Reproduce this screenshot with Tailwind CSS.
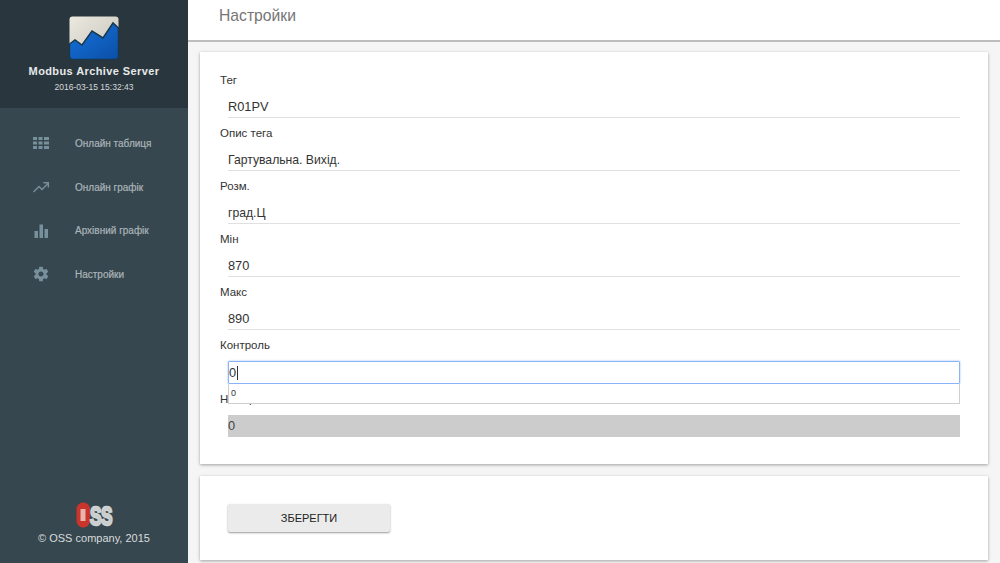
<!DOCTYPE html>
<html lang="en">
<head>
    <meta charset="UTF-8" />
    <title>Modbus Archive Server</title>
    <script src="https://cdn.jsdelivr.net/npm/@tailwindcss/browser@4"></script>
</head>
<body class="font-['Liberation_Sans',sans-serif]">
    <div class="flex h-[563px] w-[1000px] overflow-hidden bg-[#f5f5f5]">
        <!-- sidebar -->
        <aside class="flex w-[188px] shrink-0 flex-col bg-[#37474f]">
            <div class="flex h-[108px] flex-col items-center bg-[#2a363d] pt-4">
                <svg class="h-[44px] w-[50px]" viewBox="0 0 50 44">
                    <defs>
                        <linearGradient id="sky" x1="0" y1="0" x2="1" y2="1">
                            <stop offset="0" stop-color="#ece9df" />
                            <stop offset="1" stop-color="#c4c3ba" />
                        </linearGradient>
                        <linearGradient id="sea" x1="0" y1="0" x2="1" y2="1">
                            <stop offset="0" stop-color="#1673de" />
                            <stop offset="1" stop-color="#0b4fa6" />
                        </linearGradient>
                    </defs>
                    <rect x="0.5" y="0.5" width="49" height="43" rx="3" fill="url(#sky)" />
                    <path d="M0.5 28 L6 24 L13 29 L23 15 L34 22 L44 7 L49.5 12 V40.5 a3 3 0 0 1 -3 3 H3.5 a3 3 0 0 1 -3 -3 Z" fill="url(#sea)" stroke="#17384f" stroke-width="1.5" />
                </svg>
                <p class="mt-[4px] text-[11px] leading-[14px] font-bold tracking-[0.4px] text-[#e6e9ea]">Modbus Archive Server</p>
                <p class="mt-[4px] text-[8.5px] leading-[11px] text-[#d5d9db]">2016-03-15 15:32:43</p>
            </div>
            <nav class="flex flex-col pt-[13px] text-[10px] text-[#aab4b9] [-webkit-text-stroke:0.2px]">
                <a class="flex h-[44px] items-center gap-[26px] pl-[33px]">
                    <svg class="h-4 w-4 shrink-0" viewBox="0 0 16 16" fill="#78909c"><path d="M0 2h4v3H0zM5.500 2h4v3h-4zM11 2h5v3h-5zM0 6.500h4v3H0zM5.500 6.500h4v3h-4zM11 6.500h5v3h-5zM0 11h4v3H0zM5.500 11h4v3h-4zM11 11h5v3h-5z" /></svg>
                    <span>Онлайн таблиця</span>
                </a>
                <a class="flex h-[44px] items-center gap-[26px] pl-[33px]">
                    <svg class="h-4 w-4 shrink-0" viewBox="0 0 16 16" fill="none" stroke="#78909c" stroke-width="1.400"><path d="M0.500 13 L6 7.500 L9 10.500 L15 4.500" /><path d="M10.500 3.800 H15.300 V8.500" /></svg>
                    <span>Онлайн графік</span>
                </a>
                <a class="flex h-[43px] items-center gap-[26px] pl-[33px]">
                    <svg class="h-4 w-4 shrink-0" viewBox="0 0 16 16" fill="#78909c"><path d="M1.500 8h3.500v7H1.500zM6.500 1.500h3.500V15H6.500zM11.500 6h3.500v9h-3.500z" /></svg>
                    <span>Архівний графік</span>
                </a>
                <a class="flex h-[44px] items-center gap-[26px] pl-[33px]">
                    <svg class="h-4 w-4 shrink-0 scale-110" viewBox="0 0 24 24" fill="#78909c"><path d="M19.430 12.980c.04-.32.07-.64.07-.98s-.03-.66-.07-.98l2.110-1.650c.19-.15.24-.42.12-.64l-2-3.460c-.12-.22-.39-.3-.61-.22l-2.490 1c-.52-.4-1.080-.73-1.690-.98l-.38-2.650C14.460 2.180 14.250 2 14 2h-4c-.25 0-.46.18-.49.42l-.38 2.650c-.61.25-1.170.59-1.690.98l-2.490-1c-.23-.09-.49 0-.61.22l-2 3.460c-.13.22-.07.49.12.64l2.110 1.650c-.04.32-.07.65-.07.98s.03.66.07.98l-2.110 1.650c-.19.15-.24.42-.12.64l2 3.460c.12.22.39.3.61.22l2.490-1c.52.4 1.080.73 1.690.98l.38 2.650c.03.24.24.42.49.42h4c.25 0 .46-.18.49-.42l.38-2.650c.61-.25 1.170-.59 1.690-.98l2.490 1c.23.09.49 0 .61-.22l2-3.460c.12-.22.07-.49-.12-.64l-2.110-1.650zM12 15.500c-1.930 0-3.500-1.570-3.500-3.500s1.570-3.500 3.500-3.500 3.500 1.570 3.500 3.500-1.570 3.500-3.500 3.500z" /></svg>
                    <span>Настройки</span>
                </a>
            </nav>
            <div class="mt-auto flex flex-col items-center pb-[18px]">
                <svg class="h-[26px] w-[37px] overflow-visible" viewBox="0 0 37 26">
                    <rect x="0.500" y="0.500" width="13.500" height="25" rx="6.500" fill="#c9352a" />
                    <rect x="4.500" y="7" width="5" height="12" fill="#e8b4ac" />
                    <g font-family="Liberation Sans" font-weight="700" font-size="26" fill="#bfc2c3" stroke="#cfd1d2" stroke-width="2.500">
                        <text transform="translate(14 23) scale(0.66 1)">S</text>
                        <text transform="translate(25 23) scale(0.66 1)">S</text>
                    </g>
                </svg>
                <p class="mt-[3px] text-[11px] leading-[14px] text-[#d8dcde]">© OSS company, 2015</p>
            </div>
        </aside>

        <main class="flex min-w-0 flex-1 flex-col">
            <header class="flex h-[42px] shrink-0 items-start border-b-2 border-[#bdbdbd] bg-white pl-[31px] pt-[7px]">
                <h1 class="text-[15.7px] leading-[18px] text-[#757575]">Настройки</h1>
            </header>

            <!-- form card -->
            <section class="ml-3 mt-[10px] h-[412px] w-[788px] shrink-0 bg-white px-5 pt-[20px] shadow-[0_1px_3px_rgba(0,0,0,0.35)]">
                <div class="relative flex flex-col text-[11.5px] leading-[16px] text-[#333]">
                    <label class="h-[16px]">Тег</label>
                    <div class="mx-2 mt-1 h-[26px] border-b border-[#e0e0e0] text-[12.8px] leading-[30px]">R01PV</div>
                    <label class="mt-[7px] h-[16px]">Опис тега</label>
                    <div class="mx-2 mt-1 h-[26px] border-b border-[#e0e0e0] text-[12.2px] leading-[30px]">Гартувальна. Вихід.</div>
                    <label class="mt-[7px] h-[16px]">Розм.</label>
                    <div class="mx-2 mt-1 h-[26px] border-b border-[#e0e0e0] text-[12.2px] leading-[30px]">град.Ц</div>
                    <label class="mt-[7px] h-[16px]">Мін</label>
                    <div class="mx-2 mt-1 h-[26px] border-b border-[#e0e0e0] text-[12.8px] leading-[30px]">870</div>
                    <label class="mt-[7px] h-[16px]">Макс</label>
                    <div class="mx-2 mt-1 h-[26px] border-b border-[#e0e0e0] text-[12.8px] leading-[30px]">890</div>
                    <label class="mt-[7px] h-[16px]">Контроль</label>
                    <div class="mx-2 mt-[8px] flex h-[23px] items-center rounded-[1px] border border-[#8ab4f8] text-[12.8px] shadow-[0_0_2px_#8ab4f8]">0<span class="ml-px h-[14px] w-px bg-[#333]"></span></div>
                    <label class="mt-[7px] h-[16px]">Номер</label>
                    <div class="mx-2 mt-[8px] h-[22px] bg-[#cccccc] text-[12.8px] leading-[22px] text-[#444]">0</div>
                    <!-- autocomplete list over the label -->
                    <div class="absolute left-2 right-2 top-[312px] h-[20px] border-x border-b border-[#cfcfcf] bg-white pl-[2px] text-[9px] leading-[18px] text-[#333]">0</div>
                </div>
            </section>

            <section class="ml-3 mt-3 h-[84px] w-[788px] shrink-0 bg-white pl-[28px] pt-[28px] shadow-[0_1px_3px_rgba(0,0,0,0.35)]">
                <button class="h-[28px] w-[162px] rounded-[2px] bg-[#ebebeb] text-[11px] text-[#222] shadow-[0_1px_2px_rgba(0,0,0,0.4)]">ЗБЕРЕГТИ</button>
            </section>
        </main>
    </div>
</body>
</html>
